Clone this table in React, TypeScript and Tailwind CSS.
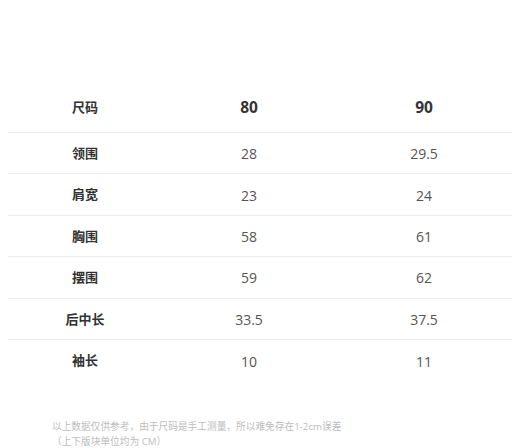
import React from "react";

const rows: [string, string, string][] = [
  ["领围", "28", "29.5"],
  ["肩宽", "23", "24"],
  ["胸围", "58", "61"],
  ["摆围", "59", "62"],
  ["后中长", "33.5", "37.5"],
  ["袖长", "10", "11"],
];

export default function App() {
  return (
    <div
      className="w-[520px] h-[448px] bg-white overflow-hidden pt-[81px]"
      style={{ fontFamily: '"Open Sans", "Noto Sans CJK SC", sans-serif' }}
    >
      <div className="mx-2 w-[504px]">
        <div className="grid grid-cols-[154px_174px_176px] h-[52px] items-center pt-[2px] border-b border-[#ececec]">
          <div className="text-center text-[13px] font-bold text-[#333]">尺码</div>
          <div className="text-center text-[15.5px] font-bold text-[#333]">80</div>
          <div className="text-center text-[15.5px] font-bold text-[#333]">90</div>
        </div>
        {rows.map(([label, a, b], i) => (
          <div
            key={label}
            className={
              i < rows.length - 1
                ? "grid grid-cols-[154px_174px_176px] h-[41.4px] items-center pt-[1px] border-b border-[#ececec]"
                : "grid grid-cols-[154px_174px_176px] h-[41.4px] items-center pt-[1px]"
            }
          >
            <div className="text-center text-[13px] font-bold text-[#333]">{label}</div>
            <div className="text-center text-[14px] text-[#555]">{a}</div>
            <div className="text-center text-[14px] text-[#555]">{b}</div>
          </div>
        ))}
      </div>
      <div className="mt-[38px] pl-[52px] text-[9.7px] leading-[15px] text-[#bdbdbd]">
        <div>以上数据仅供参考，由于尺码是手工测量，所以难免存在1-2cm误差</div>
        <div>（上下版块单位均为 CM）</div>
      </div>
    </div>
  );
}
